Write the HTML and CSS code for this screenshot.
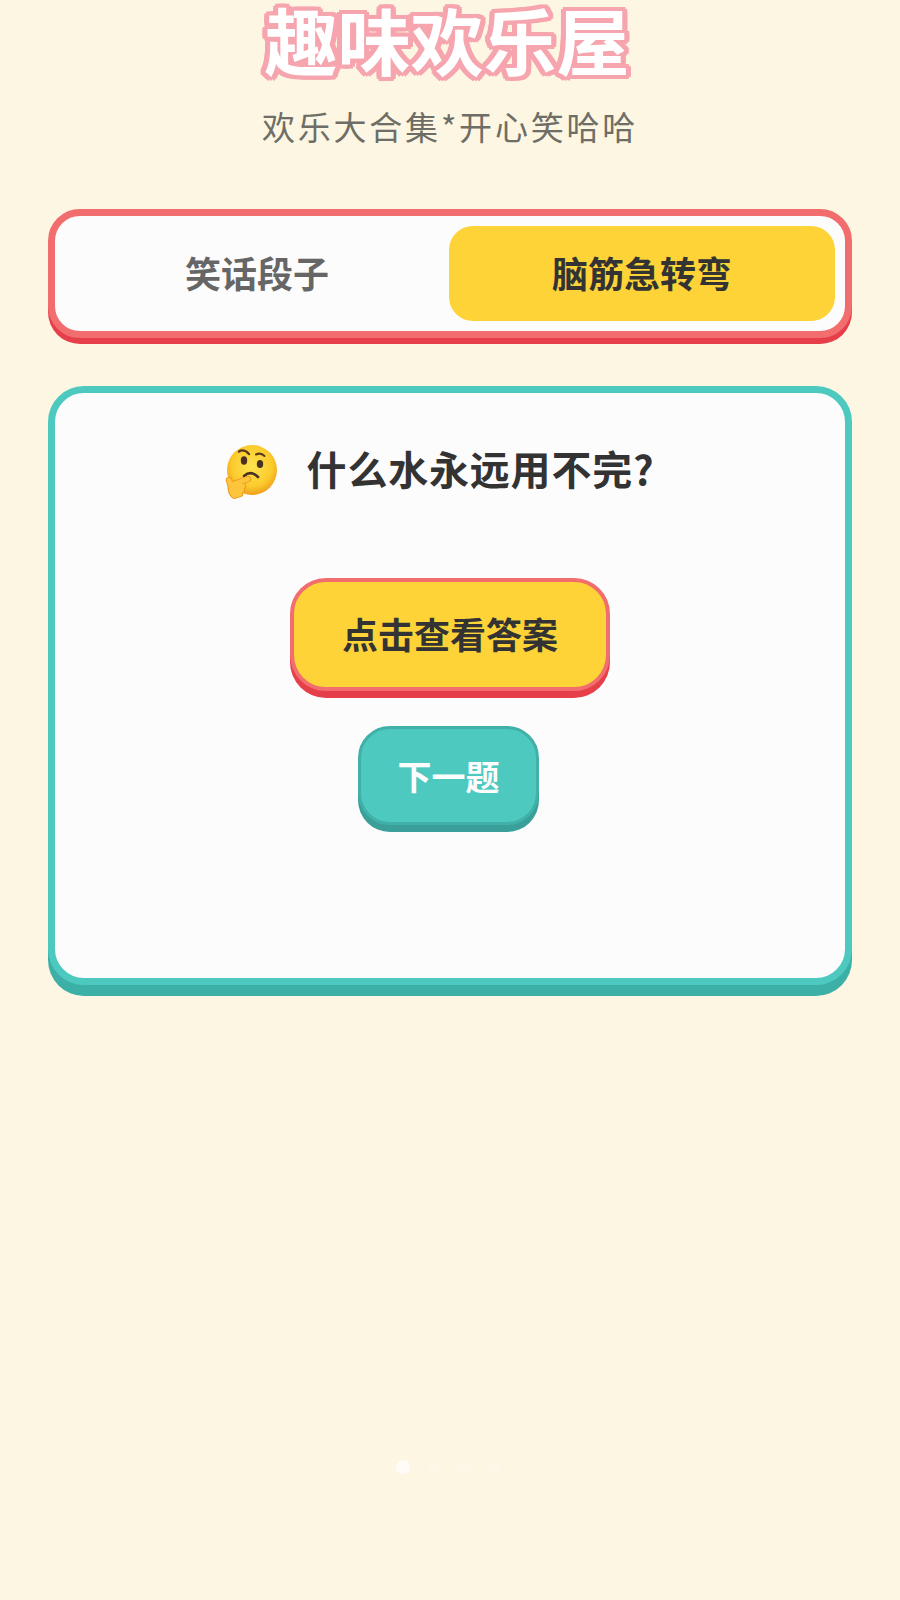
FILE: index.html
```html
<!DOCTYPE html>
<html lang="zh-CN">
<head>
    <meta charset="UTF-8">
    <meta name="viewport" content="width=device-width, initial-scale=1.0">
    <title>趣味欢乐屋</title>
    <link rel="stylesheet" href="styles.css">
</head>
<body>
    <div class="page">
        <header class="header">
            <h1 class="title">趣味欢乐屋</h1>
            <p class="subtitle">欢乐大合集*开心笑哈哈</p>
        </header>

        <div class="tabs">
            <div class="tab">笑话段子</div>
            <div class="tab tab-active">脑筋急转弯</div>
        </div>

        <div class="card">
            <div class="question">
                <svg class="emoji" viewBox="0 0 56 56" width="56" height="56">
                    <defs>
                        <radialGradient id="face" cx="50%" cy="42%" r="58%">
                            <stop offset="0" stop-color="#fde34e"/>
                            <stop offset="0.7" stop-color="#fbcb2d"/>
                            <stop offset="1" stop-color="#f09f1a"/>
                        </radialGradient>
                    </defs>
                    <circle cx="30" cy="27" r="25" fill="url(#face)"/>
                    <path d="M17 8.500c3-2 7-1 10 2.500" fill="none" stroke="#5a3a1e" stroke-width="2.400" stroke-linecap="round"/>
                    <path d="M34 11.500c3-1.500 6-1 8.500 1.500" fill="none" stroke="#5a3a1e" stroke-width="2" stroke-linecap="round"/>
                    <ellipse cx="22" cy="17.500" rx="3.200" ry="4.200" fill="#4a3022"/>
                    <ellipse cx="38" cy="21" rx="3.200" ry="4" fill="#4a3022"/>
                    <path d="M22 33c4-3.500 9-4 14 1" fill="none" stroke="#4a3022" stroke-width="2.600" stroke-linecap="round"/>
                    <!-- hand: outline strokes first, then the lighter fingers on top -->
                    <g fill="none" stroke-linecap="round">
                        <path d="M7 37l1.500 5M12 41l14-5M12 45.500l9-2.500M12 49l8-2M13 52.500l5-1.500" stroke="#ea9a1e" stroke-width="6.500"/>
                        <path d="M9 44c0 3 .5 6 3 8" stroke="#ea9a1e" stroke-width="7"/>
                        <path d="M7 37l1.500 5M12 41l14-5M12 45.500l9-2.500M12 49l8-2M13 52.500l5-1.500" stroke="#fcc53c" stroke-width="4.600"/>
                        <path d="M9 44c0 3 .5 6 3 8" stroke="#fcc53c" stroke-width="5"/>
                    </g>
                </svg>
                <span class="question-text">什么水永远用不完?</span>
            </div>
            <div class="actions">
                <button class="btn btn-answer">点击查看答案</button>
                <button class="btn btn-next">下一题</button>
            </div>
        </div>
    </div>

    <div class="dots">
        <span class="dot dot-on"></span>
        <span class="dot"></span>
        <span class="dot"></span>
        <span class="dot"></span>
    </div>
</body>
</html>
```

FILE: styles.css
```css
* {
    box-sizing: border-box;
}

body {
    margin: 0;
    height: 1600px;
    overflow: hidden;
    background-color: #fdf6e3;
    font-family: "Noto Sans CJK SC", "Noto Sans", sans-serif;
    color: #333;
}

.page {
    padding: 0 48px 0 48px;
}

.header {
    text-align: center;
    height: 209px;
    padding-top: 4px;
}

.title {
    margin: 0 6px 0 0;
    font-family: "Liberation Sans", "Noto Sans CJK SC", sans-serif;
    font-size: 73px;
    line-height: 82px;
    font-weight: 700;
    color: #fff;
    text-shadow:
        5px 0 0 #f6a5ae, -5px 0 0 #f6a5ae, 0 4px 0 #f6a5ae, 0 -4px 0 #f6a5ae,
        3px 3px 0 #f6a5ae, -3px 3px 0 #f6a5ae, 3px -3px 0 #f6a5ae, -3px -3px 0 #f6a5ae,
        5px 2px 0 #f6a5ae, -5px 2px 0 #f6a5ae, 3px 4px 0 #f6a5ae, -3px 4px 0 #f6a5ae,
        5px -2px 0 #f6a5ae, -5px -2px 0 #f6a5ae, 3px -4px 0 #f6a5ae, -3px -4px 0 #f6a5ae;
}

.subtitle {
    margin: 17px 0 0;
    font-size: 33px;
    line-height: 46px;
    letter-spacing: 2.800px;
    color: #6e6e66;
}

.tabs {
    display: flex;
    height: 129px;
    padding: 10px;
    background-color: #fcfcfc;
    border: 7px solid #f26d6d;
    border-radius: 32px;
    box-shadow: 0 6px 0 #e63f4a;
}

.tab {
    flex: 1;
    display: flex;
    align-items: center;
    justify-content: center;
    padding-bottom: 4px;
    border-radius: 24px;
    font-size: 36px;
    font-weight: 700;
    color: #666;
}

.tab-active {
    flex: none;
    width: 386px;
    background-color: #fdd338;
    color: #333;
}

.card {
    height: 599px;
    margin-top: 48px;
    padding-top: 47px;
    background-color: #fcfcfc;
    border: 7px solid #4dc9bf;
    border-radius: 36px;
    box-shadow: 0 11px 0 #3cafa7;
}

.question {
    display: flex;
    align-items: center;
    justify-content: center;
    gap: 29px;
    height: 56px;
    padding-right: 24px;
}

.emoji {
    flex: none;
    margin-top: 6px;
}

.question-text {
    font-size: 40px;
    font-weight: 700;
    letter-spacing: 0.800px;
    color: #333;
}

.actions {
    display: flex;
    flex-direction: column;
    align-items: center;
    margin-top: 82px;
}

.btn {
    display: block;
    padding: 0;
    font-family: inherit;
    font-weight: 700;
}

.btn-answer {
    width: 320px;
    height: 113px;
    padding-bottom: 4px;
    background-color: #fdd338;
    border: 4px solid #f26d6d;
    border-radius: 36px;
    box-shadow: 0 7px 0 #e63f4a;
    font-size: 36px;
    color: #333;
}

.btn-next {
    width: 181px;
    height: 99px;
    margin-top: 35px;
    margin-right: 3px;
    background-color: #4dc9bf;
    border: 3px solid #41b0a8;
    border-radius: 32px;
    box-shadow: 0 7px 0 #3a9f98;
    font-size: 34px;
    color: #fdfdfd;
}

.dots {
    position: absolute;
    top: 1460px;
    left: 396px;
    display: flex;
    align-items: center;
    gap: 18px;
}

.dot {
    width: 12px;
    height: 12px;
    border-radius: 50%;
    background-color: #fff;
    opacity: 0.2;
}

.dot-on {
    width: 14px;
    height: 14px;
    opacity: 0.7;
}
```
